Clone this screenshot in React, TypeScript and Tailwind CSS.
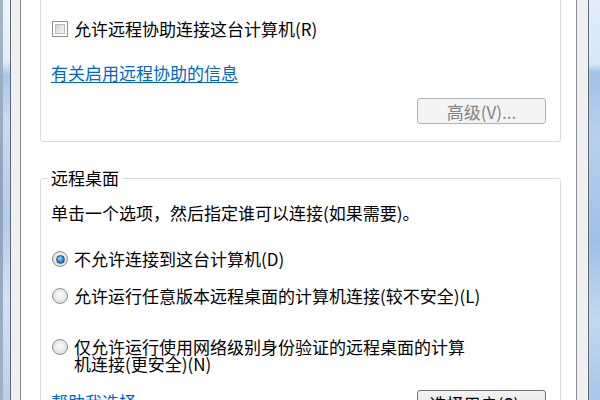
import React from "react"

function CheckBox() {
  return (
    <div className="h-[16px] w-[16px] shrink-0 border border-[#8e8f8f] bg-white p-[2px]">
      <div className="h-full w-full border border-[#b9bcc1] bg-[linear-gradient(135deg,#cbcfd5_0%,#e6e7e9_55%,#f7f7f7_100%)]" />
    </div>
  )
}

function Radio({ checked }: { checked?: boolean }) {
  return (
    <div className="flex h-[16px] w-[16px] shrink-0 items-center justify-center rounded-full border border-[#8e8f8f] bg-[radial-gradient(circle_at_50%_45%,#fdfdfd_0%,#ececec_45%,#c9cbce_100%)]">
      {checked && (
        <div className="h-[9px] w-[9px] rounded-full border border-[#1a4f86] bg-[radial-gradient(circle_at_40%_35%,#a9e0fb_0%,#3b8fd3_45%,#14589e_100%)]" />
      )}
    </div>
  )
}

export default function App() {
  return (
    <div className="flex h-[400px] w-[600px] overflow-hidden bg-white font-['Noto_Sans_CJK_SC',sans-serif] text-[17px] text-black">
      {/* left window frame */}
      <div className="w-[3px] bg-[linear-gradient(to_bottom,#a4b5c8_0%,#8fa4bc_50%,#9fb2c7_100%)]" />
      <div className="w-[7px] bg-[linear-gradient(to_bottom,#eef4fa_0%,#e4edf7_15%,#a9c5e6_19%,#c8dbf0_30%,#b3cce9_55%,#d3e2f3_75%,#b9d0ea_100%)]" />
      <div className="w-[1px] bg-[#5f6b78]" />
      <div className="w-[9px] bg-[#f0f0f0]" />

      {/* tab page */}
      <div className="w-[557px] border-x border-[#898c95] bg-white pl-[19px] pr-[15px]">
        <div className="rounded-b-[3px] border-x border-b border-[#d5dfe5] pb-[17px] pl-[11px] pr-[14px] pt-[20px]">
          <div className="flex items-center gap-[6px] leading-[18px]">
            <CheckBox />
            <span>允许远程协助连接这台计算机(R)</span>
          </div>
          <div className="mt-[26px] leading-[18px]">
            <span className="-ml-[1px] text-[#0066cc] underline underline-offset-2">有关启用远程协助的信息</span>
          </div>
          <div className="mt-[16px] flex justify-end">
            <button className="flex h-[26px] w-[129px] items-center justify-center rounded-[3px] border border-[#adb2b5] bg-[#f4f4f4] leading-none text-[#838383]">
              高级(V)...
            </button>
          </div>
        </div>

        <fieldset className="mt-[27px] rounded-[3px] border border-[#d5dfe5] pl-[11px] pr-[14px]">
          <legend className="-ml-[4px] px-[3px] leading-[18px]">远程桌面</legend>
          <p className="-ml-[1px] mt-[17px] leading-[18px]">单击一个选项，然后指定谁可以连接(如果需要)。</p>
          <div className="mt-[28px] flex items-center gap-[6px] leading-[18px]">
            <Radio checked />
            <span>不允许连接到这台计算机(D)</span>
          </div>
          <div className="mt-[19px] flex items-center gap-[6px] leading-[18px]">
            <Radio />
            <span>允许运行任意版本远程桌面的计算机连接(较不安全)(L)</span>
          </div>
          <div className="mt-[33px] flex items-start gap-[6px] leading-[17px]">
            <div className="mt-[1px]">
              <Radio />
            </div>
            <span className="w-[400px]">仅允许运行使用网络级别身份验证的远程桌面的计算机连接(更安全)(N)</span>
          </div>
          <div className="mt-[18px] flex items-start justify-between">
            <span className="-ml-[1px] pt-[3px] leading-[18px] text-[#0066cc] underline underline-offset-2">帮助我选择</span>
            <button className="flex h-[26px] w-[129px] items-center justify-center rounded-[3px] border border-[#707070] bg-[linear-gradient(to_bottom,#f2f2f2_0%,#ebebeb_50%,#dddddd_51%,#cfcfcf_100%)] leading-none">
              选择用户(S)...
            </button>
          </div>
          <div className="h-[20px]" />
        </fieldset>
      </div>

      {/* right window frame */}
      <div className="w-[11px] bg-[#f0f0f0]" />
      <div className="w-[1px] bg-[#5f6b78]" />
      <div className="w-[11px] bg-[linear-gradient(to_bottom,#e1ecf8_0%,#d9e7f6_16%,#a3c2e6_18%,#b8d0ed_35%,#9fc0e7_60%,#c3d8f0_80%,#a8c6e8_100%)]" />
    </div>
  )
}
